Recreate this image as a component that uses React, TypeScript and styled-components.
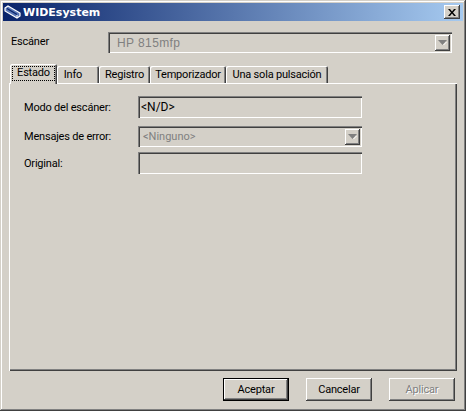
import React from 'react';
import styled, { createGlobalStyle } from 'styled-components';

const GlobalStyle = createGlobalStyle`
  html, body {
    margin: 0;
    padding: 0;
    background: #d4d0c8;
  }
  * {
    box-sizing: border-box;
  }
`;

const Win = styled.div`
  width: 466px;
  height: 411px;
  padding: 3px;
  display: flex;
  flex-direction: column;
  background: #d4d0c8;
  color: #000;
  font-family: Roboto, "Liberation Sans", Arial, sans-serif;
  font-size: 11px;
  letter-spacing: -0.2px;
  box-shadow: inset -1px -1px 0 #404040, inset 1px 1px 0 #d4d0c8, inset -2px -2px 0 #808080, inset 2px 2px 0 #fff;
`;

const TitleBar = styled.div`
  height: 18px;
  flex: none;
  padding: 0 3px 0 1px;
  display: flex;
  align-items: center;
  gap: 2px;
  background: linear-gradient(90deg, #0a246a 0%, #a6caf0 100%);
`;

const Title = styled.span`
  flex: 1;
  color: #fff;
  font-family: "DejaVu Sans", Verdana, sans-serif;
  font-size: 11px;
  font-weight: bold;
  letter-spacing: 0;
`;

const CloseBox = styled.div`
  width: 16px;
  height: 14px;
  display: flex;
  align-items: center;
  justify-content: center;
  background: #d4d0c8;
  box-shadow: inset -1px -1px 0 #404040, inset 1px 1px 0 #fff, inset -2px -2px 0 #808080;
`;

const Body = styled.div`
  flex: 1;
  display: flex;
  flex-direction: column;
  padding: 11px 6px 0;
`;

const ScannerRow = styled.div`
  height: 21px;
  display: flex;
  align-items: center;
`;

const ScannerLabel = styled.span`
  width: 99px;
  padding: 0 0 3px 2px;
  flex: none;
`;

const Sunken = styled.div<{ $w?: number; $h: number }>`
  width: ${p => (p.$w ? `${p.$w}px` : '224px')};
  height: ${p => p.$h}px;
  display: flex;
  align-items: center;
  padding: 2px;
  background: #d4d0c8;
  box-shadow: inset 1px 1px 0 #808080, inset 2px 2px 0 #404040, inset -1px -1px 0 #fff, inset -2px -2px 0 #d4d0c8;
`;

const ComboText = styled.span<{ $big?: boolean }>`
  flex: 1;
  padding-left: ${p => (p.$big ? '7px' : '3px')};
  color: #808080;
  font-family: ${p => (p.$big ? '"Liberation Sans", Arial, sans-serif' : 'inherit')};
  font-size: ${p => (p.$big ? '12px' : '11px')};
  letter-spacing: ${p => (p.$big ? '0.4px' : '0')};
`;

const ValueText = styled.span`
  align-self: flex-start;
  padding: 2px 0 0 1px;
  font-size: 12px;
  letter-spacing: 0;
`;

const ArrowBtn = styled.div`
  width: 15px;
  height: 16px;
  display: flex;
  align-items: center;
  justify-content: center;
  background: #d4d0c8;
  box-shadow: inset -1px -1px 0 #404040, inset 1px 1px 0 #fff, inset -2px -2px 0 #808080;
`;

const TabStrip = styled.div`
  margin-top: 11px;
  padding-left: 1px;
  height: 19px;
  display: flex;
  align-items: flex-end;
  position: relative;
  z-index: 1;
`;

const Tab = styled.div<{ $w: number; $active?: boolean; $shift?: number }>`
  width: ${p => p.$w}px;
  height: ${p => (p.$active ? '20px' : '17px')};
  margin-bottom: ${p => (p.$active ? '-1px' : '0')};
  display: flex;
  justify-content: center;
  padding-top: 2px;
  padding-right: ${p => p.$shift ?? 0}px;
  background: #d4d0c8;
  border-radius: 2px 2px 0 0;
  box-shadow: inset 1px 1px 0 #fff, inset -1px 0 0 #404040, inset -2px 0 0 #808080;
`;

const Focus = styled.span`
  width: 43px;
  height: 15px;
  line-height: 14px;
  text-align: center;
  outline: 1px dotted #000;
  outline-offset: -1px;
`;

const Panel = styled.div`
  width: 448px;
  height: 288px;
  padding: 13px 0 0 14px;
  display: flex;
  flex-direction: column;
  background: #d4d0c8;
  box-shadow: inset 1px 1px 0 #fff, inset -1px -1px 0 #404040, inset -2px -2px 0 #808080;
`;

const FieldRow = styled.div<{ $mt?: number }>`
  display: flex;
  align-items: center;
  margin-top: ${p => p.$mt ?? 0}px;
`;

const FieldLabel = styled.span`
  width: 115px;
  padding-left: 1px;
  flex: none;
`;

const Footer = styled.div`
  margin-top: 7px;
  display: flex;
  gap: 17px;
  padding-left: 214px;
`;

const Btn = styled.div<{ $def?: boolean; $off?: boolean }>`
  width: 66px;
  height: 23px;
  display: flex;
  align-items: center;
  justify-content: center;
  background: #d4d0c8;
  color: ${p => (p.$off ? '#808080' : '#000')};
  text-shadow: ${p => (p.$off ? '1px 1px 0 #fff' : 'none')};
  box-shadow: ${p =>
    p.$def
      ? 'inset 0 0 0 1px #000, inset -2px -2px 0 #404040, inset 2px 2px 0 #fff, inset -3px -3px 0 #808080'
      : 'inset -1px -1px 0 #404040, inset 1px 1px 0 #fff, inset -2px -2px 0 #808080'};
`;

const Arrow = ({ muted }: { muted?: boolean }) => (
  <svg width="9" height="5" viewBox="0 0 9 5">
    <path d="M0 0h9L4.5 5z" fill={muted ? '#808080' : '#000'} />
    <path d="M8 2l-3 3h1l3-3z" fill="#fff" />
  </svg>
);

const ScannerIcon = () => (
  <svg width="17" height="15" viewBox="0 0 17 15">
    <path d="M1 3l3-2 12 7v3l-3 2L1 6z" fill="#5a78b8" stroke="#fff" strokeWidth="1.2" />
    <path d="M3 3.5l10 6" stroke="#0a246a" strokeWidth="1.4" />
    <path d="M13 10v3" stroke="#fff" />
  </svg>
);

const CloseIcon = () => (
  <svg width="8" height="7" viewBox="0 0 8 7">
    <path d="M0 0h2l2 2.5L6 0h2L5 3.5 8 7H6L4 4.5 2 7H0l3-3.5z" fill="#000" />
  </svg>
);

const tabs = [
  { label: 'Info', w: 42, shift: 10 },
  { label: 'Registro', w: 51, shift: 0 },
  { label: 'Temporizador', w: 76, shift: 0 },
  { label: 'Una sola pulsación', w: 102, shift: 0 },
];

export default function App() {
  return (
    <>
      <GlobalStyle />
      <Win>
        <TitleBar>
          <ScannerIcon />
          <Title>WIDEsystem</Title>
          <CloseBox>
            <CloseIcon />
          </CloseBox>
        </TitleBar>
        <Body>
          <ScannerRow>
            <ScannerLabel>Escáner</ScannerLabel>
            <Sunken $w={344} $h={21}>
              <ComboText $big>HP 815mfp</ComboText>
              <ArrowBtn>
                <Arrow muted />
              </ArrowBtn>
            </Sunken>
          </ScannerRow>
          <TabStrip>
            <Tab $w={47} $active>
              <Focus>Estado</Focus>
            </Tab>
            {tabs.map(t => (
              <Tab key={t.label} $w={t.w} $shift={t.shift}>
                {t.label}
              </Tab>
            ))}
          </TabStrip>
          <Panel>
            <FieldRow>
              <FieldLabel>Modo del escáner:</FieldLabel>
              <Sunken $h={22}>
                <ValueText>&lt;N/D&gt;</ValueText>
              </Sunken>
            </FieldRow>
            <FieldRow $mt={8}>
              <FieldLabel>Mensajes de error:</FieldLabel>
              <Sunken $h={21}>
                <ComboText>&lt;Ninguno&gt;</ComboText>
                <ArrowBtn>
                  <Arrow muted />
                </ArrowBtn>
              </Sunken>
            </FieldRow>
            <FieldRow $mt={5}>
              <FieldLabel>Original:</FieldLabel>
              <Sunken $h={22} />
            </FieldRow>
          </Panel>
          <Footer>
            <Btn $def>Aceptar</Btn>
            <Btn>Cancelar</Btn>
            <Btn $off>Aplicar</Btn>
          </Footer>
        </Body>
      </Win>
    </>
  );
}
